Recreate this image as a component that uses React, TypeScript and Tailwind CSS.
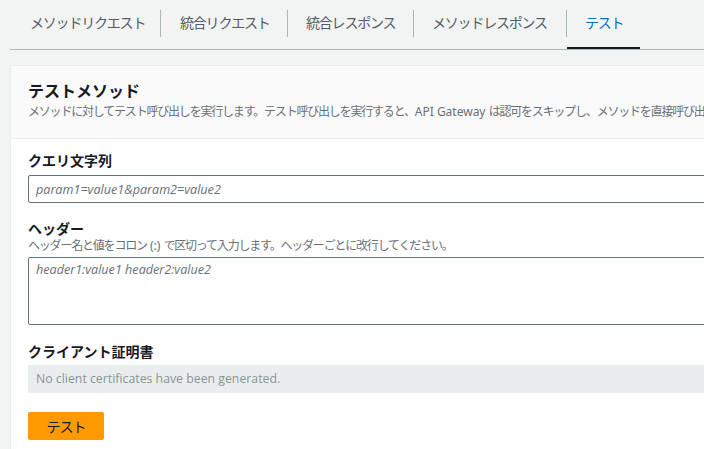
import React from 'react';

const JP = "font-['Noto_Sans','Noto_Sans_CJK_JP',sans-serif]";

const TABS = [
  { label: 'メソッドリクエスト', w: 'w-[150px] pl-[20px]' },
  { label: '統合リクエスト', w: 'w-[126px] pl-[19px]' },
  { label: '統合レスポンス', w: 'w-[125px] pl-[18px]' },
  { label: 'メソッドレスポンス', w: 'w-[152px] pl-[18px]' },
  { label: 'テスト', w: 'w-[73px] pl-[18px]' },
];

function Tabs() {
  return (
    <div className="ml-[10px] flex h-[50px] border-b border-[#aab7b8]">
      {TABS.map((t, i) => {
        const active = i === TABS.length - 1;
        return (
          <React.Fragment key={t.label}>
            {i > 0 && <div className="mt-[10px] h-[27px] w-px bg-[#aab7b8]" />}
            <button
              className={
                'relative flex h-[49px] shrink-0 items-center whitespace-nowrap pb-[4px] text-[14px] tracking-[-1.2px] ' +
                t.w +
                ' ' +
                (active ? 'text-[#0073bb]' : 'text-[#545b64]')
              }
            >
              {t.label}
              {active && <span className="absolute bottom-0 left-0 right-0 h-[2px] bg-[#16191f]" />}
            </button>
          </React.Fragment>
        );
      })}
    </div>
  );
}

export default function App() {
  return (
    <div className={`h-[449px] w-[704px] overflow-hidden bg-[#f2f3f3] ${JP}`}>
      <Tabs />
      <div className="ml-[10px] mt-[15px] w-[780px] border border-[#eaeded] bg-white">
        <div className="border-b border-[#eaeded] bg-[#fafafa] px-[17px] pb-[18px] pt-[15px]">
          <h2 className="text-[16px] font-bold leading-[20px] text-[#16191f]">テストメソッド</h2>
          <p className="mt-[3px] whitespace-nowrap text-[12px] leading-[16px] tracking-[-1.2px] text-[#687078]">
            メソッドに対してテスト呼び出しを実行します。テスト呼び出しを実行すると、
            <span className="tracking-normal">API Gateway </span>
            は認可をスキップし、メソッドを直接呼び出します。
          </p>
        </div>

        <div className="px-[17px] pb-[20px] pt-[13px]">
          <label className="block text-[14px] font-bold leading-[18px] text-[#16191f]">クエリ文字列</label>
          <input
            className="mt-[5px] block h-[28px] w-full rounded-[2px] border border-[#687078] px-[7px] font-['Open_Sans',sans-serif] text-[12.6px] italic outline-none placeholder:text-[#687078]"
            placeholder="param1=value1&param2=value2"
          />

          <label className="mt-[17px] block text-[14px] font-bold leading-[18px] text-[#16191f]">ヘッダー</label>
          <p className="whitespace-nowrap text-[12px] leading-[16px] tracking-[-1.2px] text-[#687078]">
            ヘッダー名と値をコロン<span className="tracking-normal"> (:) </span>で区切って入力します。ヘッダーごとに改行してください。
          </p>
          <textarea
            className="mt-[3px] block h-[68px] w-full resize-none rounded-[2px] border border-[#687078] px-[7px] py-[3px] font-['Open_Sans',sans-serif] text-[12.6px] italic outline-none placeholder:text-[#687078]"
            placeholder="header1:value1 header2:value2"
          />

          <label className="mt-[18px] block text-[14px] font-bold leading-[18px] text-[#16191f]">クライアント証明書</label>
          <div className="mt-[4px] flex h-[28px] items-center rounded-[2px] bg-[#eaeded] px-[8px] font-['Open_Sans',sans-serif] text-[12.3px] text-[#879596]">
            No client certificates have been generated.
          </div>

          <button className="mt-[19px] h-[28px] w-[76px] rounded-[2px] bg-[#ff9900] text-[14px] tracking-[-1px] text-[#16191f]">
            テスト
          </button>
        </div>
      </div>
    </div>
  );
}
